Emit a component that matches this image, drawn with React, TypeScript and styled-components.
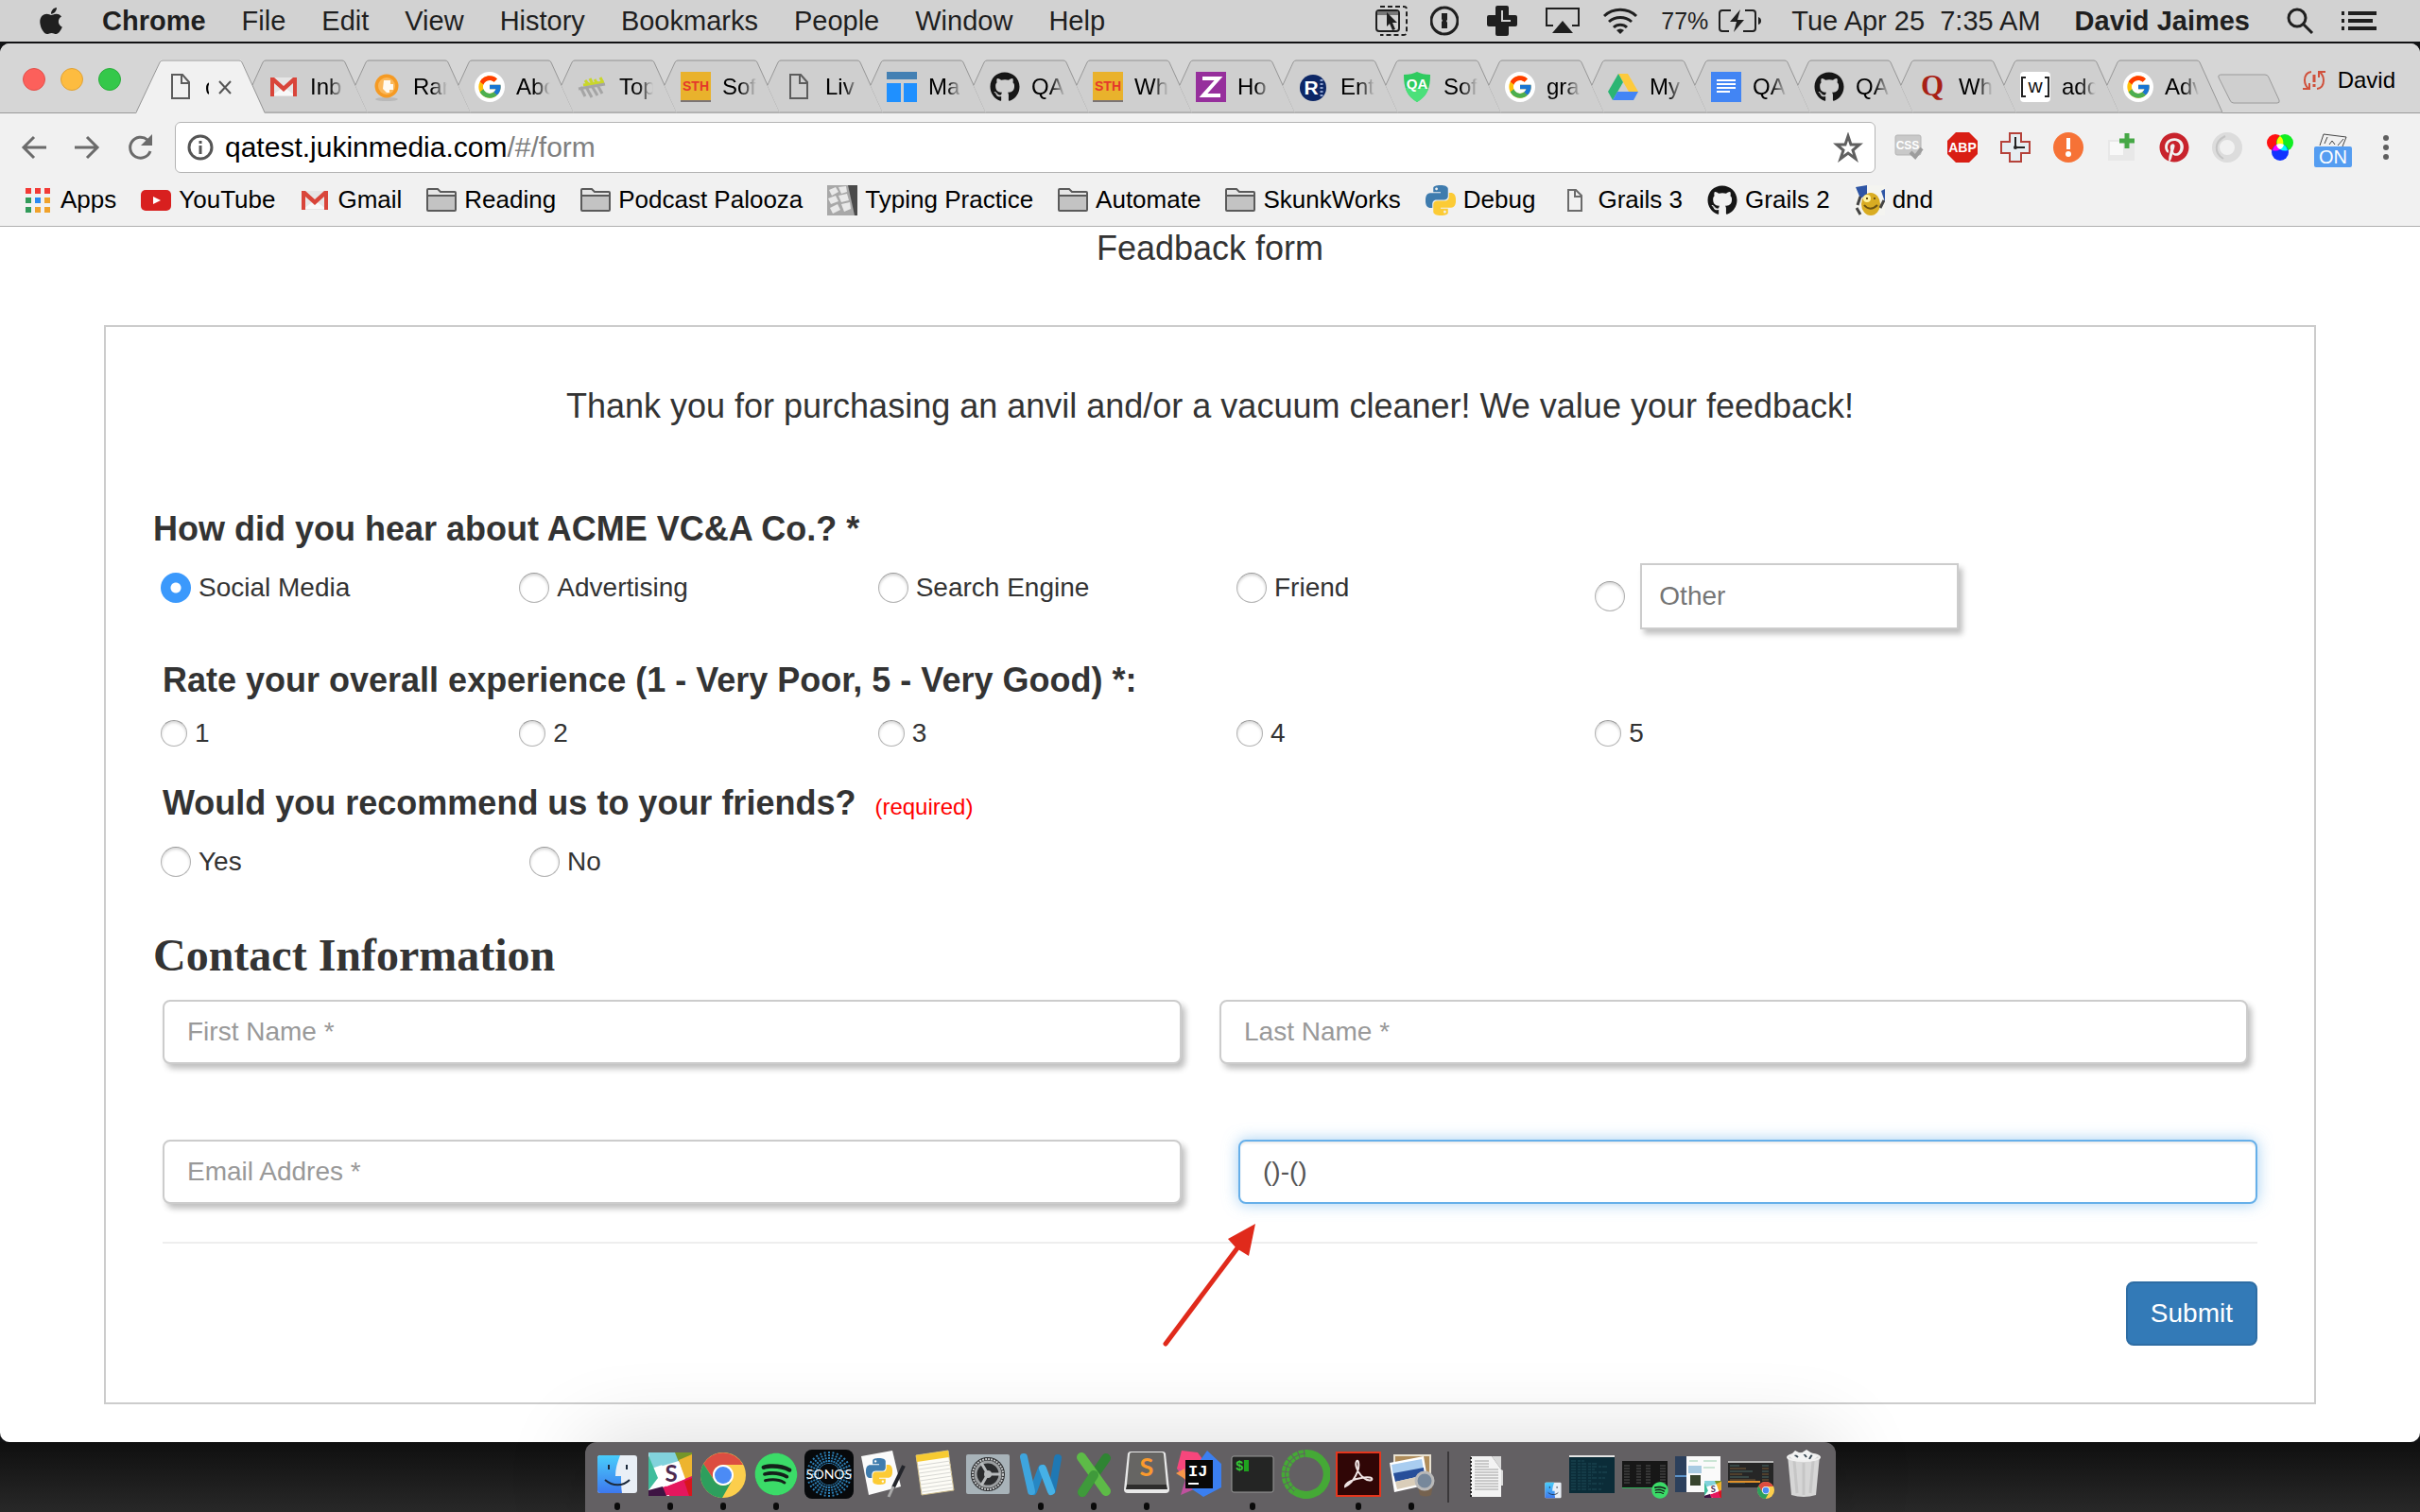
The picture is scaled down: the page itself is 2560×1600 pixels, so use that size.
import React from "react";
import styled, { createGlobalStyle } from "styled-components";
import { FaApple, FaGithub, FaPinterest, FaSpotify } from "react-icons/fa";
import { FcGoogle } from "react-icons/fc";

const sans = `"Liberation Sans", Arial, Helvetica, sans-serif`;
const serif = `"Liberation Serif", "Times New Roman", serif`;

const Global = createGlobalStyle`
  * { box-sizing: border-box; }
  body { margin: 0; background: #111214; font-family: ${sans}; color: #333; }
  svg { display: block; flex: none; }
  button, input { font-family: inherit; margin: 0; }
  h1, h2, h3, p { margin: 0; font-weight: normal; }
`;

/* ---------- desktop shell ---------- */

const Desktop = styled.div`
  min-height: 100vh;
  display: flex;
  flex-direction: column;
  overflow: hidden;
`;

const MenuBar = styled.header`
  height: 44px;
  margin-bottom: 2px;
  padding: 0 46px 0 38px;
  background: #d2d2d2;
  color: #1f1f1f;
  display: flex;
  align-items: center;
  justify-content: space-between;
  font-size: 29px;
  white-space: pre;
`;

const MenuGroup = styled.nav`
  display: flex;
  align-items: center;
  gap: 38px;
`;

const StatusGroup = styled.div`
  display: flex;
  align-items: center;
  gap: 24px;
`;

const MenuItem = styled.button<{ $bold?: boolean }>`
  border: 0;
  padding: 0;
  background: none;
  color: inherit;
  font-size: 29px;
  font-weight: ${(p) => (p.$bold ? "bold" : "normal")};
  white-space: pre;
`;

const Battery = styled.span`
  display: flex;
  align-items: center;
  gap: 10px;
  font-size: 25px;
`;

const Clock = styled.span`
  padding: 0 12px 0 8px;
`;

const Window = styled.div`
  flex: 1;
  display: flex;
  flex-direction: column;
  background: #fff;
  border-radius: 10px;
  overflow: hidden;
`;

/* ---------- browser chrome ---------- */

const TabStrip = styled.div`
  height: 74px;
  background: #d6d6d6;
  display: flex;
  align-items: flex-end;
  box-shadow: inset 0 -1px #9a9a9a;
`;

const Lights = styled.div`
  align-self: center;
  width: 144px;
  padding: 2px 0 0 24px;
  display: flex;
  gap: 16px;
`;

const Light = styled.button<{ $color: string; $rim: string }>`
  width: 24px;
  height: 24px;
  padding: 0;
  border-radius: 50%;
  background: ${(p) => p.$color};
  border: 1px solid ${(p) => p.$rim};
`;

const TabButton = styled.button<{ $active?: boolean }>`
  position: relative;
  z-index: ${(p) => (p.$active ? 1 : 0)};
  width: 136px;
  height: 57px;
  margin-right: -27px;
  padding: 0 0 0 31px;
  border: 0;
  background: none;
  display: flex;
  align-items: center;
  gap: ${(p) => (p.$active ? 10 : 12)}px;
  font-size: 24px;
  color: #000;
  flex: none;
`;

const TabShape = styled.svg`
  position: absolute;
  inset: 0;
  z-index: -1;
`;

const TabTitle = styled.span<{ $sliver?: boolean }>`
  flex: none;
  width: ${(p) => (p.$sliver ? "4px" : "auto")};
  white-space: nowrap;
  mask-image: linear-gradient(to right, #000 20px, transparent 36px);
`;

const NewTab = styled.button`
  align-self: center;
  margin: 22px 0 0 22px;
  padding: 0;
  border: 0;
  background: none;
`;

const Profile = styled.button`
  height: 54px;
  margin-left: auto;
  padding: 4px 26px 0 0;
  border: 0;
  background: none;
  align-self: center;
  display: flex;
  align-items: center;
  gap: 12px;
  font-size: 24px;
  color: #000;
`;

const Toolbar = styled.div`
  display: flex;
  align-items: center;
  padding: 9px 20px 1px;
  background: #f1f1f1;
`;

const NavButton = styled.button`
  width: 56px;
  padding: 0;
  border: 0;
  background: none;
`;

const Address = styled.div`
  flex: 1;
  height: 54px;
  margin-right: 20px;
  margin-left: -3px;
  padding: 0 12px;
  display: flex;
  align-items: center;
  gap: 12px;
  border: 1px solid #b4b4b4;
  border-radius: 6px;
  background: #fff;
  font-size: 30px;
  color: #000;
`;

const UrlText = styled.span`
  flex: 1;
`;

const UrlPath = styled.span`
  color: #7f7f7f;
`;

const IconButton = styled.button`
  width: 32px;
  height: 32px;
  padding: 0;
  border: 0;
  background: none;
`;

const Extensions = styled.div`
  display: flex;
  align-items: center;
  gap: 24px;
`;

const ToggleExtension = styled.button`
  width: 40px;
  height: 38px;
  margin: 8px -4px 0;
  padding: 0;
  border: 0;
  background: none;
  display: flex;
  flex-direction: column;
  align-items: center;
`;

const OnBadge = styled.span`
  width: 40px;
  background: #559df1;
  border-radius: 2px;
  color: #fff;
  font-size: 20px;
  line-height: 22px;
  text-align: center;
`;

const Bookmarks = styled.nav`
  height: 56px;
  padding: 0 24px;
  background: #f1f1f1;
  border-bottom: 1px solid #b0b0b0;
  display: flex;
  align-items: center;
  gap: 26px;
`;

const Bookmark = styled.a`
  display: flex;
  align-items: center;
  gap: 8px;
  color: #000;
  font-size: 26px;
  text-decoration: none;
  white-space: nowrap;
`;

/* ---------- feedback page ---------- */

const Page = styled.main`
  padding: 3px 110px 40px;
`;

const PageTitle = styled.h1`
  font-size: 36px;
  line-height: 40px;
  text-align: center;
`;

const Card = styled.form`
  margin-top: 61px;
  padding: 64px 50px 60px;
  border: 2px solid #ccc;
`;

const Intro = styled.p`
  margin-bottom: 90px;
  font-size: 36px;
  line-height: 40px;
  text-align: center;
`;

const Question = styled.fieldset`
  margin: 0 0 34px;
  padding: 0;
  border: 0;
  min-width: 0;
`;

const Legend = styled.legend<{ $indent?: boolean }>`
  padding: 0 0 0 ${(p) => (p.$indent ? 10 : 0)}px;
  margin-bottom: 16px;
  font-size: 36px;
  line-height: 40px;
  font-weight: bold;
`;

const Required = styled.span`
  margin-left: 20px;
  color: #f00;
  font-size: 24px;
  line-height: 24px;
  font-weight: normal;
`;

const Options = styled.div<{ $columns: string }>`
  margin: 0 -20px;
  display: grid;
  grid-template-columns: ${(p) => p.$columns};
  align-items: start;
`;

const Option = styled.label<{ $small?: boolean }>`
  height: ${(p) => (p.$small ? 40 : 52)}px;
  padding-left: 28px;
  display: flex;
  align-items: center;
  gap: 8px;
  font-size: 28px;
`;

const OtherOption = styled.div`
  height: 70px;
  padding-left: 28px;
  display: flex;
  align-items: center;
  gap: 16px;
`;

const Radio = styled.input<{ $small?: boolean }>`
  appearance: none;
  flex: none;
  width: ${(p) => (p.$small ? 28 : 32)}px;
  height: ${(p) => (p.$small ? 28 : 32)}px;
  border: 1px solid #b2b2b2;
  border-top-color: #989898;
  border-radius: 50%;
  background: #fff;
  box-shadow: inset 0 2px 3px rgba(0, 0, 0, 0.16);

  &:checked {
    border: 0;
    background: radial-gradient(circle, #fff 5px, #3b99fc 6px);
    box-shadow: none;
  }
`;

const TextField = styled.input<{ $square?: boolean; $shifted?: boolean }>`
  flex: none;
  width: ${(p) => (p.$square ? "337px" : "auto")};
  min-width: 0;
  height: ${(p) => (p.$square ? 70 : 68)}px;
  margin: ${(p) => (p.$shifted ? "0 10px 0 -20px" : "0")};
  padding: 0 ${(p) => (p.$square ? 18 : 24)}px;
  border: 2px solid #ccc;
  border-radius: ${(p) => (p.$square ? 0 : 8)}px;
  outline: 0;
  background: #fff;
  box-shadow: 4px 5px 6px #c0c0c0;
  color: #555;
  font-size: 28px;

  &::placeholder {
    color: ${(p) => (p.$square ? "#757575" : "#999")};
    opacity: 1;
  }
`;

const ActiveField = styled(TextField)`
  border-color: #66afe9;
  box-shadow: inset 0 2px 2px rgba(0, 0, 0, 0.075), 0 0 16px rgba(102, 175, 233, 0.6);
`;

const ContactTitle = styled.h2`
  margin: 47px 0 21px;
  font-family: ${serif};
  font-size: 48px;
  line-height: 52px;
  font-weight: bold;
`;

const Fields = styled.div`
  padding: 0 10px;
  display: grid;
  grid-template-columns: 1fr 1fr;
  gap: 80px 60px;
`;

const FieldSlot = styled.div`
  position: relative;
  display: grid;
`;

const Arrow = styled.svg`
  position: absolute;
  left: -82px;
  top: 86px;
  pointer-events: none;
`;

const Footer = styled.div`
  margin: 40px 10px 0;
  padding-top: 40px;
  border-top: 2px solid #eee;
  display: flex;
  justify-content: flex-end;
`;

const Submit = styled.button`
  height: 68px;
  padding: 0 24px;
  border: 2px solid #2e6da4;
  border-radius: 8px;
  background: #337ab7;
  color: #fff;
  font-size: 28px;
`;

/* ---------- dock ---------- */

const DockArea = styled.footer`
  display: flex;
  justify-content: center;
  background: linear-gradient(#0f0f0f, #282828);
  position: relative;
`;

const Dock = styled.div`
  height: 74px;
  padding: 8px 8px 0;
  display: flex;
  gap: 4px;
  background: #636063;
  border-radius: 12px 12px 0 0;
  box-shadow: 0 0 90px rgba(0, 0, 0, 0.16);
`;

const DockItem = styled.button`
  width: 52px;
  padding: 0;
  border: 0;
  background: none;
  display: flex;
  flex-direction: column;
  align-items: center;
  gap: 4px;
`;

const RunningDot = styled.span`
  width: 6px;
  height: 8px;
  border-radius: 4px;
  background: #0a0a0a;
`;

const DockDivider = styled.span`
  width: 2px;
  height: 54px;
  margin: 2px 9px 0 8px;
  background: #3a383a;
`;

/* ---------- drawings ---------- */

type SvgProps = { w?: number; h?: number; box?: string; children: React.ReactNode };
const Art = ({ w = 32, h = 32, box, children }: SvgProps) => (
  <svg width={w} height={h} viewBox={box ?? `0 0 ${w} ${h}`} fill="none" aria-hidden="true">
    {children}
  </svg>
);

const PYTHON =
  "M14.25.18l.9.2.73.26.59.3.45.32.34.34.25.34.16.33.1.3.04.26.02.2-.01.13V8.5l-.05.63-.13.55-.21.46-.26.38-.3.31-.33.25-.35.19-.35.14-.33.1-.3.07-.26.04-.21.02H8.77l-.69.05-.59.14-.5.22-.41.27-.33.32-.27.35-.2.36-.15.37-.1.35-.07.32-.04.27-.02.21v3.06H3.17l-.21-.03-.28-.07-.32-.12-.35-.18-.36-.26-.36-.36-.35-.46-.32-.59-.28-.73-.21-.88-.14-1.05-.05-1.23.06-1.22.16-1.04.24-.87.32-.71.36-.57.4-.44.42-.33.42-.24.4-.16.36-.1.32-.05.24-.01h.16l.06.01h8.16v-.83H6.18l-.01-2.75-.02-.37.05-.34.11-.31.17-.28.25-.26.31-.23.38-.2.44-.18.51-.15.58-.12.64-.1.71-.06.77-.04.84-.02 1.27.05zm-6.3 1.98l-.23.33-.08.41.08.41.23.34.33.22.41.09.41-.09.33-.22.23-.34.08-.41-.08-.41-.23-.33-.33-.22-.41-.09-.41.09z";

const PythonMark = () => (
  <>
    <path d={PYTHON} fill="#3f7cae" />
    <path d={PYTHON} fill="#fccb35" transform="rotate(180 12 12)" />
  </>
);

const PageIcon = () => (
  <Art>
    <path d="M7 3h11l7 8v17H7z M17 3v9h8" stroke="#5c5c5c" strokeWidth="2" />
  </Art>
);
const SmallPageIcon = () => (
  <Art>
    <path d="M9 5h8l6 6v16H9z M16 5v7h7" stroke="#6b6b6b" strokeWidth="2" />
  </Art>
);
const GmailIcon = () => (
  <Art>
    <path d="M3 6h26v20H3z" fill="#e6e6e6" />
    <path d="M4 25l12-9 12 9z" fill="#f8f8f8" />
    <path d="M2 6h4l10 9 10-9h4v20h-4V12L16 21 6 12v14H2z" fill="#d9453a" />
  </Art>
);
const OrangeIcon = () => (
  <Art>
    <ellipse cx="16" cy="29" rx="12" ry="2" fill="#aaa" opacity=".6" />
    <circle cx="16" cy="15" r="12.5" fill="#f59a23" />
    <circle cx="16" cy="15" r="9" fill="#fbb85a" />
    <path d="M13 9h7v4h3v6h-4v3h-3l-4-4z" fill="#fffaf0" />
  </Art>
);
const GoogleIcon = () => (
  <Art>
    <circle cx="16" cy="16" r="16" fill="#fff" />
    <FcGoogle x={2} y={2} size={28} />
  </Art>
);
const TopIcon = () => (
  <Art>
    <path d="M8 9l3 4M13 7l3 6M18 8l3 5M24 6l3 6M6 14l22-3" stroke="#c9d62b" strokeWidth="3" />
    <path d="M3 16l5 10M9 16l6 11M15 15l6 10M21 14l5 9M1 18l28-5" stroke="#a5a5a5" strokeWidth="3" />
  </Art>
);
const SthIcon = () => (
  <Art>
    <path d="M0 0h32v32H0z" fill="#e9b22c" />
    <path d="M0 30h32v2H0z" fill="#7b7474" />
    <text x="16" y="20" fontSize="14" fontWeight="bold" textAnchor="middle" fill="#e5392b" fontFamily="Liberation Sans, sans-serif">STH</text>
  </Art>
);
const TLogo = () => (
  <Art>
    <path d="M0 0h32v8H0z" fill="#4380b3" />
    <path d="M0 12h15v20H0zM18 12h14v20H18z" fill="#1f90ff" />
  </Art>
);
const ZIcon = () => (
  <Art>
    <path d="M0 0h32v32H0z" fill="#962f9c" />
    <path d="M7 7h17L8 25h18" stroke="#fff" strokeWidth="4" />
  </Art>
);
const RIcon = () => (
  <Art>
    <circle cx="15" cy="17" r="14" fill="#0d2766" />
    <path d="M24 8v18" stroke="#8fa3cf" strokeWidth="3" strokeDasharray="2 2" />
    <text x="13" y="24" fontSize="21" fontWeight="bold" textAnchor="middle" fill="#fff" fontFamily="Liberation Sans, sans-serif">R</text>
  </Art>
);
const QaIcon = () => (
  <Art>
    <path d="M2 3c6 0 10-1 14-3 4 2 8 3 14 3 0 14-3 22-14 29C5 25 2 17 2 3z" fill="#2ecb5f" />
    <path d="M4 17h24c-1 6-5 11-12 15C9 28 5 23 4 17z" fill="#4be07a" />
    <text x="16" y="18" fontSize="15" fontWeight="bold" textAnchor="middle" fill="#fff" fontFamily="Liberation Sans, sans-serif">QA</text>
  </Art>
);
const DriveIcon = () => (
  <Art>
    <path d="M11 2h10l11 19H22z" fill="#fdca3c" />
    <path d="M11 2L0 21l5 9 11-19z" fill="#2bb573" />
    <path d="M10 21h22l-5 9H5z" fill="#4385f5" />
  </Art>
);
const DocsIcon = () => (
  <Art>
    <path d="M0 0h32v32H0z" fill="#4285f4" />
    <path d="M6 9h20M6 13h20M6 17h20M6 21h14" stroke="#fff" strokeWidth="2" />
  </Art>
);
const QuoraIcon = () => (
  <Art>
    <text x="16" y="25" fontSize="31" fontWeight="bold" textAnchor="middle" fill="#a82015" fontFamily="Liberation Serif, serif">Q</text>
  </Art>
);
const WIcon = () => (
  <Art>
    <rect width="32" height="32" rx="4" fill="#fff" />
    <path d="M6 6H2v20h4M26 6h4v20h-4" stroke="#222" strokeWidth="2" />
    <text x="16" y="22" fontSize="21" textAnchor="middle" fill="#111" fontFamily="Liberation Sans, sans-serif">w</text>
  </Art>
);
const GithubIcon = () => <FaGithub size={32} color="#161616" />;

const AppsIcon = () => (
  <Art>
    {["#f33a36", "#f33a36", "#f33a36", "#329b5a", "#2a8af0", "#f0a22b", "#329b5a", "#f0a22b", "#f0a22b"].map((c, i) => (
      <rect key={i} x={3 + (i % 3) * 10} y={3 + Math.floor(i / 3) * 10} width="6" height="6" fill={c} />
    ))}
  </Art>
);
const YoutubeIcon = () => (
  <Art>
    <rect y="5" width="32" height="22" rx="5" fill="#d8201f" />
    <path d="M13 12v8l8-4z" fill="#fff" />
  </Art>
);
const FolderIcon = () => (
  <Art>
    <path d="M1 26V5q0-1 1-1h10l3 3h15q1 0 1 1v18q0 1-1 1H2q-1 0-1-1z" fill="#e6e6e6" stroke="#5a5a5a" strokeWidth="2" />
    <path d="M2 11h28v15H2z" fill="#c3c3c3" />
    <path d="M1 11h30" stroke="#5a5a5a" strokeWidth="2" />
  </Art>
);
const KeyboardIcon = () => (
  <Art>
    <path d="M0 0h32v32H0z" fill="#a8a8a8" />
    <path d="M22 0h10v32h-3z" fill="#4a4a4a" />
    <path d="M2 5l7-3 3 5-7 4zM12 2l8-1 1 6-6 2zM1 14l8-3 3 6-8 3zM12 11l9-2 2 7-8 2zM3 24l8-4 3 6-8 4zM15 20l9-2 1 7-7 3z" fill="#e9e9e9" />
  </Art>
);
const DndIcon = () => (
  <Art>
    <path d="M0 0h32v32H0z" fill="#f4f4f0" />
    <path d="M1 2l12-2v10L6 14zM28 6l4-2v14z" fill="#2e55a5" />
    <ellipse cx="17" cy="20" rx="10" ry="12" fill="#d9ac22" />
    <circle cx="13" cy="14" r="4" fill="#fff3a0" />
    <path d="M10 21c4 5 9 5 14 0M12 14h2M20 14h2" stroke="#6b5312" strokeWidth="2" />
    <path d="M2 24l4 7M6 12l-3 9M27 24l4-8" stroke="#444" strokeWidth="3" />
  </Art>
);
const PythonIcon = () => (
  <Art box="0 0 24 24">
    <PythonMark />
  </Art>
);

const SlackTile = () => (
  <g>
    <path d="M3 3h46v46H3z" fill="#fff" />
    <path d="M3 3h28l-4 10L6 20z" fill="#82d2dc" />
    <path d="M3 6l10 24L3 43z" fill="#3fbd9c" />
    <path d="M13 3h20l5 12-19 7z" fill="#82d2dc" />
    <path d="M31 3h18v4l-14 6z" fill="#75962a" />
    <path d="M35 11l14-6v24l-8 3z" fill="#edb42f" />
    <path d="M18 40l31-12v12l-28 9z" fill="#e5175e" />
    <path d="M40 34l9-4v19h-4z" fill="#d8151d" />
    <path d="M3 43l15-4 4 10H3z" fill="#3e1443" />
    <path d="M22 41l19-7 5 15H25z" fill="#e5175e" />
    <path d="M15 18l20-6 7 19-20 8z" fill="#fff" />
    <text x="27" y="34" fontSize="24" fontWeight="bold" textAnchor="middle" fill="#4d2a50" fontFamily="Lato, sans-serif">S</text>
  </g>
);
const FinderFace = () => (
  <g>
    <rect x="5" y="6" width="42" height="40" rx="3" fill="#e9eff6" />
    <path d="M8 6h21c-3 8-5 14-5 22h6c0 6 0 12 1 18H8q-3 0-3-3V9q0-3 3-3z" fill="url(#finderBlue)" />
    <path d="M17 16v5M36 16v5" stroke="#1c2a3c" strokeWidth="2" />
    <path d="M13 32c8 7 19 7 26 0" stroke="#1c2a3c" strokeWidth="2" />
    <defs>
      <linearGradient id="finderBlue" x1="0" y1="0" x2="0" y2="1">
        <stop stopColor="#48cdfb" />
        <stop offset="1" stopColor="#3d78ee" />
      </linearGradient>
    </defs>
  </g>
);
const ChromeMark = () => (
  <g>
    <circle cx="24" cy="24" r="24" fill="#fcce4c" />
    <path d="M3.2 12A24 24 0 0 1 45 13H24A11 11 0 0 0 14.5 29.5z" fill="#dc4d41" />
    <path d="M3.2 12l11.3 17.5a11 11 0 0 0 19 0L23 48A24 24 0 0 1 3.2 12z" fill="#2d9f5d" />
    <circle cx="24" cy="24" r="11" fill="#fff" />
    <circle cx="24" cy="24" r="9" fill="#4b8bf5" />
  </g>
);
const SpotifyMark = ({ x, y, size }: { x: number; y: number; size: number }) => (
  <>
    <circle cx={x + size / 2} cy={y + size / 2} r={size / 2 - 1} fill="#14201a" />
    <FaSpotify x={x} y={y} size={size} color="#3bdb68" />
  </>
);

const rays = Array.from({ length: 32 }, (_, i) => i);
const rows = Array.from({ length: 11 }, (_, i) => i);

const dockArt: Record<string, React.ReactNode> = {
  Finder: <FinderFace />,
  Slack: <SlackTile />,
  Chrome: (
    <svg x="2" y="3" width="48" height="48" viewBox="0 0 48 48">
      <ChromeMark />
    </svg>
  ),
  Spotify: <SpotifyMark x={3} y={3} size={46} />,
  Sonos: (
    <>
      <rect width="52" height="52" rx="8" fill="#07090b" />
      {rays.map((i) => (
        <path key={i} d="M26 2v13" stroke="#2d7fb5" strokeWidth="2" strokeDasharray="2 1" transform={`rotate(${i * 11.25} 26 26)`} />
      ))}
      <circle cx="26" cy="26" r="11" fill="#07090b" />
      <text x="26" y="31" fontSize="14" textAnchor="middle" fill="#fff" fontFamily="Lato, sans-serif">SONOS</text>
    </>
  ),
  IDLE: (
    <>
      <path d="M4 7l33-6 9 38-34 9z" fill="#fbfbfb" />
      <svg x="9" y="9" width="28" height="28" viewBox="0 0 24 24">
        <PythonMark />
      </svg>
      <path d="M49 17L38 40" stroke="#23252b" strokeWidth="4" />
      <path d="M38 39l-5 11" stroke="#aaa" strokeWidth="3" />
    </>
  ),
  Notes: (
    <>
      <path d="M6 6l34-5 6 42-34 5z" fill="#fdfcf6" stroke="#c9b98a" />
      <path d="M6 6l34-5 1 7-34 5z" fill="#f7cb32" />
      {rows.slice(0, 8).map((i) => (
        <path key={i} d={`M${8 + i / 2} ${17 + i * 4}l34-5`} stroke="#d8d8d4" />
      ))}
    </>
  ),
  "System Preferences": (
    <>
      <rect x="3" y="5" width="46" height="42" rx="2" fill="#a8b3b9" />
      <circle cx="26" cy="26" r="18" fill="#2b2c2e" />
      <circle cx="26" cy="26" r="16" stroke="#c3c6c8" strokeWidth="2" strokeDasharray="2 1" />
      <circle cx="26" cy="26" r="13" stroke="#9c9fa1" strokeWidth="3" />
      <path d="M26 26h13M26 26l-7-12M26 26l-7 12" stroke="#b7babc" strokeWidth="3" />
      <circle cx="26" cy="26" r="4" fill="#b7babc" />
    </>
  ),
  Word: (
    <>
      <path d="M44 9l-6 34" stroke="#1f78b4" strokeWidth="8" strokeLinecap="round" />
      <path d="M27 20l-9 24" stroke="#2687c4" strokeWidth="8" strokeLinecap="round" />
      <path d="M28 20l9 24" stroke="#46b1e6" strokeWidth="8" strokeLinecap="round" />
      <path d="M8 8l8 36" stroke="#3ea5de" strokeWidth="8" strokeLinecap="round" />
    </>
  ),
  Excel: (
    <>
      <path d="M39 9L14 45" stroke="#2f8433" strokeWidth="10" strokeLinecap="round" />
      <path d="M13 8l26 36" stroke="#5dbb47" strokeWidth="10" strokeLinecap="round" />
      <path d="M26 27L14 45" stroke="#3f9a3b" strokeWidth="10" strokeLinecap="round" />
    </>
  ),
  Sublime: (
    <>
      <path d="M6 4q1-2 3-2h34q2 0 3 2l4 38q0 4-4 4H6q-4 0-4-4z" fill="#e9e9e9" />
      <path d="M8 5q0-2 2-2h32q2 0 2 2l3 32H5z" fill="#666563" />
      <path d="M5 37h42l1 5H4z" fill="#2e2d2c" />
      <text x="26" y="28" fontSize="27" fontWeight="bold" textAnchor="middle" fill="#fb9a2d" fontFamily="Lato, sans-serif">S</text>
    </>
  ),
  IntelliJ: (
    <>
      <path d="M7 1l17 2 10 14L12 34 2 20z" fill="#f7467c" />
      <path d="M2 20l10 8-6 20 14-6 2-18z" fill="#c0519f" />
      <path d="M1 25l9-5 2 12z" fill="#f7954a" />
      <path d="M34 1l15 14v25L30 50l-12-8 8-30z" fill="#3b7ff0" />
      <rect x="11" y="11" width="29" height="30" fill="#080808" />
      <text x="14" y="28" fontSize="17" fontWeight="bold" fill="#fff" fontFamily="Liberation Mono, monospace">IJ</text>
      <path d="M14 36h11" stroke="#fff" strokeWidth="2" />
    </>
  ),
  iTerm: (
    <>
      <rect x="4" y="7" width="44" height="38" rx="2" fill="#242524" stroke="#9a9a9a" />
      <text x="8" y="22" fontSize="14" fontWeight="bold" fill="#35c935" fontFamily="Liberation Mono, monospace">$</text>
      <path d="M17 11h5v12h-5z" fill="#1ea31e" />
    </>
  ),
  Anaconda: (
    <>
      <path d="M26 4a22 22 0 1 1-12 40" stroke="#45a936" strokeWidth="8" />
      <path d="M14 44A22 22 0 0 1 26 4" stroke="#45a936" strokeWidth="8" strokeDasharray="5 1" />
      <path d="M14 44A22 22 0 0 1 26 4" stroke="#636063" strokeWidth="1" />
    </>
  ),
  Acrobat: (
    <>
      <rect x="3" y="3" width="46" height="46" fill="#300606" stroke="#e5361d" strokeWidth="2" />
      <path d="M12 39c9-4 16-18 14-26-1-3-4 0-2 6 3 9 11 15 16 13 2-2-3-4-11-2-8 1-17 5-17 9z" stroke="#f0e4e4" strokeWidth="2" />
    </>
  ),
  Preview: (
    <>
      <path d="M8 6h38v30H8z" fill="#b08d5b" stroke="#e8e1d1" strokeWidth="2" />
      <path d="M3 14l36-7 5 30-36 8z" fill="#fff" />
      <path d="M5 16l32-6 2 12-32 6z" fill="#a9cdf0" />
      <path d="M7 25l32-6 1 8-31 7z" fill="#274f9a" />
      <path d="M9 34l31-7 2 8-31 7z" fill="#d9cdb9" />
      <path d="M32 36h17l-2 12q-6 3-12 0z" fill="#75624f" />
      <circle cx="40" cy="33" r="9" fill="#77889b" stroke="#b9b9b9" strokeWidth="3" />
    </>
  ),
  Document: (
    <>
      <path d="M10 7h22l10 14v29H10z" fill="#f3f3f3" />
      <path d="M32 7l10 14 2 1v16h-2V7z" fill="#d9d9d9" />
      {rows.map((i) => (
        <path key={i} d={`M14 ${12 + i * 3}h${i < 3 ? 15 : 25}`} stroke="#a0a0a0" />
      ))}
      <path d="M10 8v42" stroke="#222" strokeWidth="2" strokeDasharray="2 2" />
    </>
  ),
  "Finder window": (
    <svg x="32" y="34" width="18" height="18" viewBox="4 5 44 42">
      <FinderFace />
    </svg>
  ),
  "Terminal window": (
    <>
      <path d="M2 7h48v39H2z" fill="#0b2c38" />
      <path d="M2 6h48v2H2z" fill="#e4e4e4" />
      {rows.map((i) => (
        <path key={i} d={`M4 ${12 + i * 3}h${14 + ((i * 13) % 28)}`} stroke="#1f4a56" strokeDasharray="5 2 3 1" />
      ))}
    </>
  ),
  "Spotify window": (
    <>
      <path d="M2 12h48v28H2z" fill="#171717" />
      <path d="M2 40h48v1H2z" fill="#2fb457" />
      {rows.slice(0, 7).map((i) => (
        <path key={i} d={`M4 ${17 + i * 3}h6M17 ${17 + i * 3}h5M27 ${17 + i * 3}h5M42 ${17 + i * 3}h6`} stroke="#555" />
      ))}
      <SpotifyMark x={33} y={34} size={18} />
    </>
  ),
  "Slack window": (
    <>
      <path d="M2 7h48v38H2z" fill="#fafafa" />
      <path d="M2 7h12v38H2z" fill="#2c405c" />
      <path d="M2 27h12v2H2z" fill="#5c93ca" />
      <path d="M16 17h14v8H16z" fill="#a8cbe2" />
      <path d="M18 27h11v11H18z" fill="#38452f" />
      <path d="M32 12h14M32 19h12M17 12h9" stroke="#9bd0b0" />
      <svg x="33" y="33" width="18" height="18" viewBox="3 3 46 46">
        <SlackTile />
      </svg>
    </>
  ),
  "Editor window": (
    <>
      <path d="M2 12h48v28H2z" fill="#262626" />
      <path d="M2 12h48v2H2z" fill="#b5b5b5" />
      {rows.slice(0, 7).map((i) => (
        <path key={i} d={`M4 ${17 + i * 3}h${10 + ((i * 7) % 18)}M38 ${17 + i * 3}h7`} stroke={i % 2 ? "#7a5a35" : "#4a6a66"} />
      ))}
      <path d="M2 34h34" stroke="#e0902a" strokeWidth="2" />
      <svg x="33" y="34" width="18" height="18" viewBox="0 0 48 48">
        <ChromeMark />
      </svg>
    </>
  ),
  Trash: (
    <>
      <path d="M9 6h34l-4 42q-13 4-26 0z" fill="#d6d6d6" />
      <path d="M16 12l3 34M26 14v34M36 12l-3 34" stroke="#c6c6c6" strokeWidth="3" />
      <path d="M11 7l6-6 6 3 6-4 6 4 6 3-5 4H15z" fill="#f4f4f4" />
      <path d="M16 5l4 3M26 4l3 4M35 5l-3 5" stroke="#3b4a55" strokeWidth="2" />
      <ellipse cx="26" cy="8" rx="17" ry="4" stroke="#f0f0f0" strokeWidth="2" />
    </>
  ),
};

/* ---------- data ---------- */

const menus = ["File", "Edit", "View", "History", "Bookmarks", "People", "Window", "Help"];

const tabs: [string, React.ReactNode][] = [
  ["Inb", <GmailIcon />],
  ["Ran", <OrangeIcon />],
  ["Abo", <GoogleIcon />],
  ["Top", <TopIcon />],
  ["Sof", <SthIcon />],
  ["Liv", <PageIcon />],
  ["Ma", <TLogo />],
  ["QA", <GithubIcon />],
  ["Wh", <SthIcon />],
  ["Ho", <ZIcon />],
  ["Ent", <RIcon />],
  ["Sof", <QaIcon />],
  ["gra", <GoogleIcon />],
  ["My", <DriveIcon />],
  ["QA", <DocsIcon />],
  ["QA", <GithubIcon />],
  ["Wh", <QuoraIcon />],
  ["add", <WIcon />],
  ["Adv", <GoogleIcon />],
];

const bookmarks: [string, React.ReactNode][] = [
  ["Apps", <AppsIcon />],
  ["YouTube", <YoutubeIcon />],
  ["Gmail", <GmailIcon />],
  ["Reading", <FolderIcon />],
  ["Podcast Palooza", <FolderIcon />],
  ["Typing Practice", <KeyboardIcon />],
  ["Automate", <FolderIcon />],
  ["SkunkWorks", <FolderIcon />],
  ["Debug", <PythonIcon />],
  ["Grails 3", <SmallPageIcon />],
  ["Grails 2", <GithubIcon />],
  ["dnd", <DndIcon />],
];

const apps: [string, boolean][] = [
  ["Finder", true],
  ["Slack", true],
  ["Chrome", true],
  ["Spotify", true],
  ["Sonos", false],
  ["IDLE", false],
  ["Notes", false],
  ["System Preferences", false],
  ["Word", true],
  ["Excel", true],
  ["Sublime", true],
  ["IntelliJ", false],
  ["iTerm", true],
  ["Anaconda", false],
  ["Acrobat", true],
  ["Preview", true],
];
const shelf = ["Document", "Finder window", "Terminal window", "Spotify window", "Slack window", "Editor window", "Trash"];

const extensions: [string, React.ReactNode][] = [
  [
    "CSS validator",
    <Art>
      <rect x="1" y="3" width="27" height="21" rx="2" fill="#c9c9c9" stroke="#b4b4b4" />
      <text x="14" y="18" fontSize="12" fontWeight="bold" textAnchor="middle" fill="#fff" fontFamily="Liberation Sans, sans-serif">CSS</text>
      <path d="M17 21l5 5 7-9" stroke="#9d9d9d" strokeWidth="4" />
    </Art>,
  ],
  [
    "Adblock Plus",
    <Art>
      <path d="M9 0h14l9 9v14l-9 9H9l-9-9V9z" fill="#d91e14" />
      <text x="16" y="21" fontSize="14" fontWeight="bold" textAnchor="middle" fill="#fff" fontFamily="Liberation Sans, sans-serif">ABP</text>
    </Art>,
  ],
  [
    "Time tracker",
    <Art>
      <path d="M10 1h12v9h9v12h-9v9H10v-9H1V10h9z" fill="#e6edf1" stroke="#b5423a" strokeWidth="2" />
      <path d="M16 5v11h10" stroke="#222" strokeWidth="2" />
      <circle cx="16" cy="16" r="2" fill="#222" />
    </Art>,
  ],
  [
    "Alerts",
    <Art>
      <circle cx="16" cy="16" r="16" fill="#f67236" />
      <path d="M14 6h4v12h-4z" fill="#fff" />
      <circle cx="16" cy="23" r="3" fill="#fff" />
    </Art>,
  ],
  [
    "Add page",
    <Art>
      <path d="M2 8h18v4h10v18H2z" fill="#e8e8e8" />
      <path d="M4 10h14v14H4z" fill="#f8f8f8" />
      <path d="M22 1v16M14 9h16" stroke="#46a846" strokeWidth="5" />
    </Art>,
  ],
  ["Pinterest", <FaPinterest size={32} color="#c8232c" />],
  [
    "Ring",
    <Art>
      <circle cx="16" cy="16" r="12" stroke="#dcdcdc" strokeWidth="8" />
      <path d="M14 4c-12 6-12 18-2 24" stroke="#c4c4c4" strokeWidth="2" />
    </Art>,
  ],
  [
    "Color picker",
    <Art>
      <circle cx="11" cy="11" r="9" fill="#f11" />
      <circle cx="21" cy="11" r="9" fill="#1e2" />
      <circle cx="16" cy="21" r="9" fill="#13f" />
      <path d="M16 4a9 9 0 0 1 0 14 9 9 0 0 1 0-14z" fill="#ff0" />
      <path d="M8 19a9 9 0 0 1 8-7v6a9 9 0 0 1-8 1z" fill="#f0f" />
      <path d="M24 19a9 9 0 0 0-8-7v6a9 9 0 0 0 8 1z" fill="#0ff" />
      <path d="M12 13q4-2 8 0-1 4-4 5-3-1-4-5z" fill="#fff" />
    </Art>,
  ],
];

const Tab = ({ title, icon, active }: { title: string; icon: React.ReactNode; active?: boolean }) => (
  <TabButton type="button" $active={active}>
    <TabShape width="136" height="57" viewBox="0 0 136 57" fill="none" aria-hidden="true">
      <path
        d={active ? "M0 57L25 2q1-2 3-2h81q2 0 3 2l24 55z" : "M14 28L25 3q1-3 3-3h81q2 0 3 2l24 55H27z"}
        fill={active ? "#f1f1f1" : "#cfcfcf"}
      />
      <path
        d={active ? "M0 56L25 3q1-2 3-2h81q2 0 3 2l24 53" : "M14 27L25 3q1-2 3-2h81q2 0 3 2l24 53M27 56h109"}
        stroke="#969696"
      />
    </TabShape>
    {icon}
    <TabTitle $sliver={active}>{title}</TabTitle>
    {active && (
      <Art w={14} h={16}>
        <path d="M1 2l12 13M13 2L1 15" stroke="#555" strokeWidth="2" />
      </Art>
    )}
  </TabButton>
);

const sources = ["Social Media", "Advertising", "Search Engine", "Friend"];

export default function App() {
  return (
    <Desktop>
      <Global />
      <MenuBar>
        <MenuGroup>
          <FaApple size={32} color="#1f1f1f" />
          <MenuItem type="button" $bold>
            Chrome
          </MenuItem>
          {menus.map((m) => (
            <MenuItem type="button" key={m}>
              {m}
            </MenuItem>
          ))}
        </MenuGroup>
        <StatusGroup>
          <Art w={34} h={32}>
            <rect x="1" y="5" width="24" height="22" rx="3" stroke="#1f1f1f" strokeWidth="2" />
            <path d="M2 6h22v4H2z" fill="#777" />
            <path d="M5 1h25q3 0 3 3v24q0 3-3 3H5" stroke="#1f1f1f" strokeWidth="2" strokeDasharray="5 3" />
            <path d="M12 7l11 11h-5l3 7-3 1-3-7-3 3z" fill="#1f1f1f" />
          </Art>
          <Art w={30} h={32} box="1 0 30 32">
            <circle cx="16" cy="16" r="14" stroke="#1f1f1f" strokeWidth="3" />
            <path d="M13 8h6v7l-1 1 1 2v6h-6v-7l1-1-1-2z" fill="#1f1f1f" />
          </Art>
          <Art w={44} h={32}>
            <path d="M15 2q0-2 2-2h10q2 0 2 2v8h7q2 0 2 2v8q0 2-2 2h-7v8q0 2-2 2H17q-2 0-2-2v-8H8q-2 0-2-2v-8q0-2 2-2h7z" fill="#1f1f1f" />
            <path d="M22 5v11h9" stroke="#d2d2d2" strokeWidth="2" />
          </Art>
          <Art w={36} h={30}>
            <path d="M8 20H1V2h34v18h-7" stroke="#1f1f1f" strokeWidth="2" />
            <path d="M18 15l11 13H7z" fill="#1f1f1f" />
          </Art>
          <Art w={38} h={30}>
            <path d="M2 10a25 25 0 0 1 34 0M7 16a18 18 0 0 1 24 0M12 22a10 10 0 0 1 14 0" stroke="#1f1f1f" strokeWidth="3" />
            <path d="M15 25q4-3 8 0l-4 4z" fill="#1f1f1f" />
          </Art>
          <Battery>
            77%
            <Art w={46} h={26}>
              <path d="M14 2H5q-3 0-3 3v16q0 3 3 3h7M29 2h8q3 0 3 3v16q0 3-3 3H27" stroke="#1f1f1f" strokeWidth="2" />
              <path d="M43 9q3 1 3 4t-3 4z" fill="#1f1f1f" />
              <path d="M24 1L13 14h7l-3 11 11-13h-7z" fill="#1f1f1f" />
            </Art>
          </Battery>
          <Clock>{"Tue Apr 25  7:35 AM"}</Clock>
          <MenuItem type="button" $bold>
            David Jaimes
          </MenuItem>
          <Art w={48} h={30} box="-2 0 48 30">
            <circle cx="24" cy="12" r="9" stroke="#1f1f1f" strokeWidth="3" />
            <path d="M31 19l9 9" stroke="#1f1f1f" strokeWidth="3" />
          </Art>
          <Art w={38} h={22}>
            <path d="M8 3h30M8 11h26M8 19h30M1 3h3M1 11h3M1 19h3" stroke="#1f1f1f" strokeWidth="4" />
          </Art>
        </StatusGroup>
      </MenuBar>

      <Window>
        <TabStrip>
          <Lights>
            <Light type="button" aria-label="Close" $color="#fc605b" $rim="#e2504b" />
            <Light type="button" aria-label="Minimize" $color="#fdbc40" $rim="#e0a236" />
            <Light type="button" aria-label="Zoom" $color="#34c84a" $rim="#2aad3b" />
          </Lights>
          <Tab title="q" icon={<PageIcon />} active />
          {tabs.map(([title, icon], i) => (
            <Tab key={i} title={title} icon={icon} />
          ))}
          <NewTab type="button" aria-label="New tab">
            <Art w={66} h={32}>
              <path d="M4 1h46q3 0 4 3l11 24q1 3-2 3H17q-3 0-4-3L1 4q-1-3 3-3z" fill="#cfcfcf" stroke="#9a9a9a" />
            </Art>
          </NewTab>
          <Profile type="button">
            <Art w={26} h={24}>
              <path d="M10 3q-7 1-7 9 0 5 4 9M1 21h7v-6M16 21q7-1 7-9 0-5-4-9M25 3h-7v6" stroke="#d0513c" strokeWidth="2" />
              <path d="M13 6v8M13 16v3" stroke="#d0513c" strokeWidth="3" />
            </Art>
            David
          </Profile>
        </TabStrip>

        <Toolbar>
          <NavButton type="button" aria-label="Back">
            <Art>
              <path d="M29 16H5M16 5L5 16l11 11" stroke="#6b6b6b" strokeWidth="3" />
            </Art>
          </NavButton>
          <NavButton type="button" aria-label="Forward">
            <Art>
              <path d="M3 16h24M16 5l11 11-11 11" stroke="#6b6b6b" strokeWidth="3" />
            </Art>
          </NavButton>
          <NavButton type="button" aria-label="Reload">
            <Art>
              <path d="M27 20a11 11 0 1 1-3-12" stroke="#6b6b6b" strokeWidth="3" />
              <path d="M29 2v12H17z" fill="#6b6b6b" />
            </Art>
          </NavButton>
          <Address>
            <Art w={28} h={28}>
              <circle cx="14" cy="14" r="12" stroke="#555" strokeWidth="3" />
              <path d="M14 12v9M14 7v3" stroke="#555" strokeWidth="3" />
            </Art>
            <UrlText>
              qatest.jukinmedia.com<UrlPath>/#/form</UrlPath>
            </UrlText>
            <IconButton type="button" aria-label="Bookmark this page">
              <Art>
                <path d="M16 4l3 9h9l-7 6 3 9-8-6-8 6 3-9-7-6h9z" stroke="#606060" strokeWidth="3" />
              </Art>
            </IconButton>
          </Address>
          <Extensions>
            {extensions.map(([name, icon]) => (
              <IconButton type="button" key={name} aria-label={name}>
                {icon}
              </IconButton>
            ))}
            <ToggleExtension type="button">
              <Art w={32} h={14}>
                <path d="M6 1l24 3-4 10M6 1L2 13M10 4l-3 7M12 12l3-4 3 4M27 6l-6 7" stroke="#444" />
              </Art>
              <OnBadge>ON</OnBadge>
            </ToggleExtension>
            <IconButton type="button" aria-label="Menu">
              <Art>
                <circle cx="16" cy="6" r="3" fill="#5f5f5f" />
                <circle cx="16" cy="16" r="3" fill="#5f5f5f" />
                <circle cx="16" cy="26" r="3" fill="#5f5f5f" />
              </Art>
            </IconButton>
          </Extensions>
        </Toolbar>

        <Bookmarks>
          {bookmarks.map(([name, icon]) => (
            <Bookmark key={name} href="#">
              {icon}
              {name}
            </Bookmark>
          ))}
        </Bookmarks>

        <Page>
          <PageTitle>Feadback form</PageTitle>
          <Card onSubmit={(e) => e.preventDefault()}>
            <Intro>Thank you for purchasing an anvil and/or a vacuum cleaner! We value your feedback!</Intro>

            <Question>
              <Legend>How did you hear about ACME VC&amp;A Co.? *</Legend>
              <Options $columns="repeat(6, minmax(0, 1fr))">
                {sources.map((s, i) => (
                  <Option key={s}>
                    <Radio type="radio" name="source" defaultChecked={i === 0} />
                    {s}
                  </Option>
                ))}
                <OtherOption>
                  <Radio type="radio" name="source" aria-label="Other source" />
                  <TextField type="text" placeholder="Other" aria-label="Other" $square />
                </OtherOption>
              </Options>
            </Question>

            <Question>
              <Legend $indent>Rate your overall experience (1 - Very Poor, 5 - Very Good) *:</Legend>
              <Options $columns="repeat(6, minmax(0, 1fr))">
                {[1, 2, 3, 4, 5].map((n) => (
                  <Option key={n} $small>
                    <Radio type="radio" name="rating" $small />
                    {n}
                  </Option>
                ))}
              </Options>
            </Question>

            <Question>
              <Legend $indent>
                Would you recommend us to your friends?
                <Required>(required)</Required>
              </Legend>
              <Options $columns="390px 390px">
                {["Yes", "No"].map((a) => (
                  <Option key={a}>
                    <Radio type="radio" name="recommend" />
                    {a}
                  </Option>
                ))}
              </Options>
            </Question>

            <ContactTitle>Contact Information</ContactTitle>
            <Fields>
              <TextField type="text" placeholder="First Name *" aria-label="First Name" />
              <TextField type="text" placeholder="Last Name *" aria-label="Last Name" $shifted />
              <TextField type="email" placeholder="Email Addres *" aria-label="Email Address" />
              <FieldSlot>
                <ActiveField type="tel" defaultValue="()-()" aria-label="Phone" />
                <Arrow width="104" height="134" viewBox="0 0 104 134" aria-hidden="true">
                  <path d="M5 130L86 22" stroke="#e02a1b" strokeWidth="5" strokeLinecap="round" />
                  <path d="M100 3L71 19l9 10 13 8z" fill="#e02a1b" />
                </Arrow>
              </FieldSlot>
            </Fields>
            <Footer>
              <Submit type="submit">Submit</Submit>
            </Footer>
          </Card>
        </Page>
      </Window>

      <DockArea>
        <Dock>
          {apps.map(([name, running]) => (
            <DockItem type="button" key={name} aria-label={name}>
              <Art w={52} h={52}>
                {dockArt[name]}
              </Art>
              {running && <RunningDot />}
            </DockItem>
          ))}
          <DockDivider />
          {shelf.map((name) => (
            <DockItem type="button" key={name} aria-label={name}>
              <Art w={52} h={52}>
                {dockArt[name]}
              </Art>
            </DockItem>
          ))}
        </Dock>
      </DockArea>
    </Desktop>
  );
}
